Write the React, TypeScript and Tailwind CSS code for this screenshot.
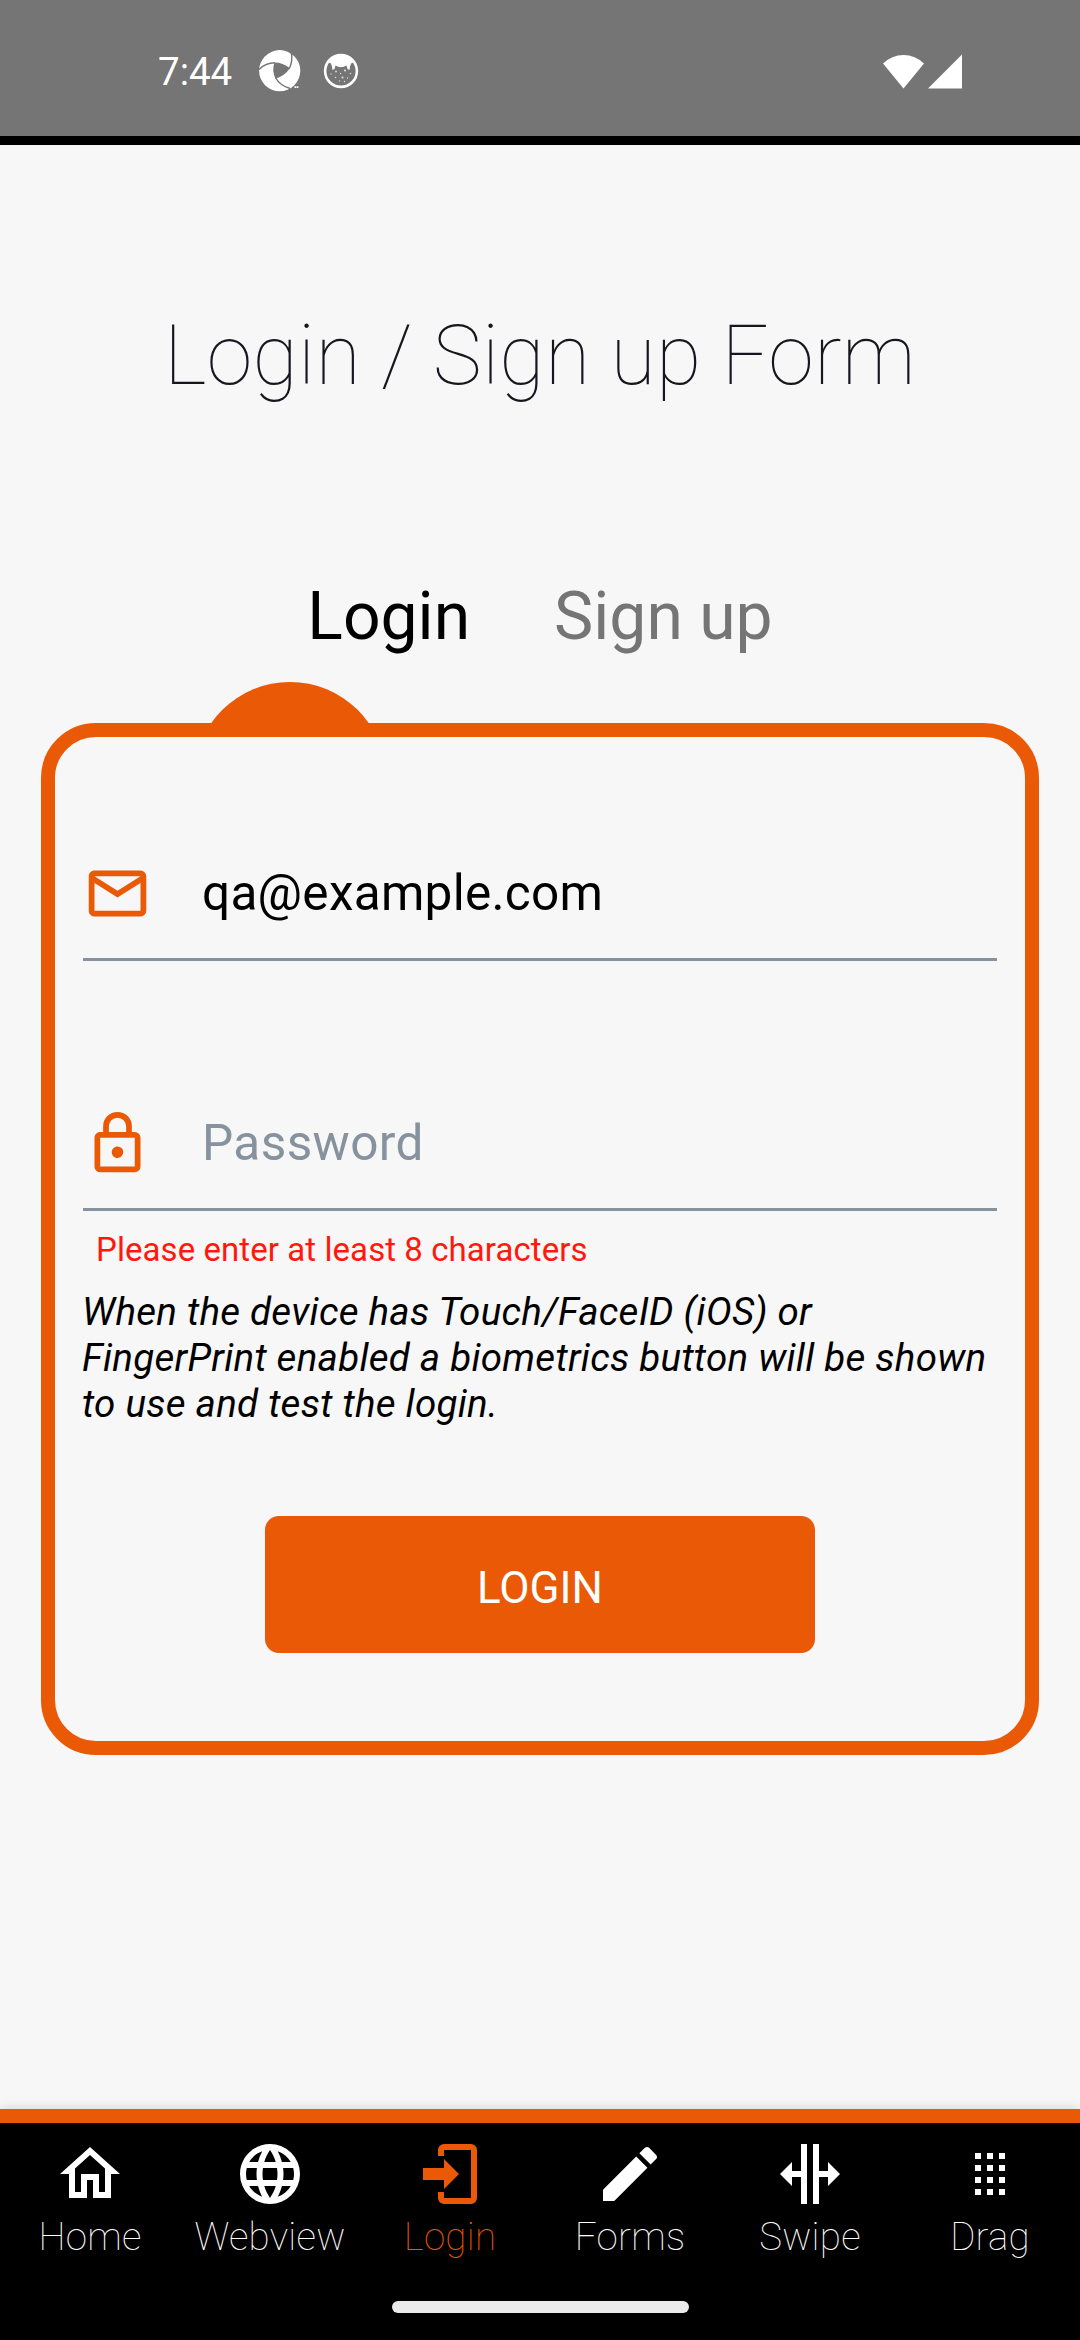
import React from "react";

const ICONS = {
  home: "M12 5.69L17 10.19V18H15V12H9V18H7V10.19L12 5.69M12 3L2 12H5V20H11V14H13V20H19V12H22L12 3Z",
  web: "M16.36,14C16.44,13.34 16.5,12.68 16.5,12C16.5,11.32 16.44,10.66 16.36,10H19.74C19.9,10.64 20,11.31 20,12C20,12.69 19.9,13.36 19.74,14M14.59,19.56C15.19,18.45 15.65,17.25 15.97,16H18.92C17.96,17.65 16.43,18.93 14.59,19.56M14.34,14H9.66C9.56,13.34 9.5,12.68 9.5,12C9.5,11.32 9.56,10.65 9.66,10H14.34C14.43,10.65 14.5,11.32 14.5,12C14.5,12.68 14.43,13.34 14.34,14M12,19.96C11.17,18.76 10.5,17.43 10.09,16H13.91C13.5,17.43 12.83,18.76 12,19.96M8,8H5.08C6.03,6.34 7.57,5.06 9.4,4.44C8.8,5.55 8.35,6.75 8,8M5.08,16H8C8.35,17.25 8.8,18.45 9.4,19.56C7.57,18.93 6.03,17.65 5.08,16M4.26,14C4.1,13.36 4,12.69 4,12C4,11.31 4.1,10.64 4.26,10H7.64C7.56,10.66 7.5,11.32 7.5,12C7.5,12.68 7.56,13.34 7.64,14M12,4.03C12.83,5.23 13.5,6.57 13.91,8H10.09C10.5,6.57 11.17,5.23 12,4.03M18.92,8H15.97C15.65,6.75 15.19,5.55 14.59,4.44C16.43,5.07 17.96,6.34 18.92,8M12,2C6.47,2 2,6.5 2,12A10,10 0 0,0 12,22A10,10 0 0,0 22,12A10,10 0 0,0 12,2Z",
  login:
    "M10 17V14H3V10H10V7L15 12L10 17M10 2H19A2 2 0 0 1 21 4V20A2 2 0 0 1 19 22H10A2 2 0 0 1 8 20V18H10V20H19V4H10V6H8V4A2 2 0 0 1 10 2Z",
  pencil:
    "M20.71,7.04C21.1,6.65 21.1,6 20.71,5.63L18.37,3.29C18,2.9 17.35,2.9 16.96,3.29L15.12,5.12L18.87,8.87M3,17.25V21H6.75L17.81,9.93L14.06,6.18L3,17.25Z",
  swipe: "M18,16V13H15V22H13V2H15V11H18V8L22,12L18,16M2,12L6,16V13H9V22H11V2H9V11H6V8L2,12Z",
  drag: "M7 5h2v2H7zM11 5h2v2h-2zM15 5h2v2h-2zM7 9h2v2H7zM11 9h2v2h-2zM15 9h2v2h-2zM7 13h2v2H7zM11 13h2v2h-2zM15 13h2v2h-2zM7 17h2v2H7zM11 17h2v2h-2zM15 17h2v2h-2z",
  email:
    "M4,4H20A2,2 0 0,1 22,6V18A2,2 0 0,1 20,20H4C2.89,20 2,19.1 2,18V6C2,4.89 2.89,4 4,4M12,11L20,6H4L12,11M4,18H20V8.37L12,13.36L4,8.37V18Z",
  lock: "M12,17C10.89,17 10,16.1 10,15C10,13.89 10.89,13 12,13A2,2 0 0,1 14,15A2,2 0 0,1 12,17M18,20V10H6V20H18M18,8A2,2 0 0,1 20,10V20A2,2 0 0,1 18,22H6C4.89,22 4,21.1 4,20V10C4,8.89 4.89,8 6,8H7V6A5,5 0 0,1 12,1A5,5 0 0,1 17,6V8H18M12,3A3,3 0 0,0 9,6V8H15V6A3,3 0 0,0 12,3Z",
};

type IconName = keyof typeof ICONS;

function Icon({ name, className }: { name: IconName; className: string }) {
  return (
    <svg viewBox="0 0 24 24" fill="currentColor" className={className}>
      <path d={ICONS[name]} />
    </svg>
  );
}

function ShutterIcon() {
  return (
    <svg viewBox="0 0 42 42" className="ml-[27px] size-[42px] text-white">
      <circle cx="20.7" cy="20.7" r="20.6" fill="currentColor" />
      <g fill="none" stroke="#757575" strokeWidth="1.5">
        <path d="M0 19.500Q6 13 16 12.800" />
        <path d="M32.300 2Q34 11 30.300 18.500" />
        <path d="M16.700 28Q21 35.500 31 38.500" />
      </g>
      <path d="M15.500 12.600Q23.500 12.500 31 18.300Q25.500 26 16.500 28.800Q12.500 20.500 15.500 12.600Z" fill="#757575" />
      <path d="M35.500 36.300h1.800v1.600h-1.800zM37.800 36.300h1.600v1.600h-1.600z" fill="currentColor" />
    </svg>
  );
}

function CatIcon() {
  return (
    <svg viewBox="0 0 36 36" className="ml-[22px] size-[36px] text-white">
      <circle cx="18" cy="18" r="15.900" fill="none" stroke="currentColor" strokeWidth="2.600" />
      <path
        d="M5 9.500Q11 1.500 18 1.500T31 9.500L28.500 10Q27 12 26.500 17L24.500 16L23.500 12.500Q21 14.300 18 14.300T12.500 12.500L11.500 16L9.500 17Q9 12 7.500 10Z"
        fill="currentColor"
      />
      <g fill="currentColor" opacity="0.75">
        <circle cx="13" cy="18.500" r="0.900" />
        <circle cx="22" cy="17.500" r="1.100" />
        <circle cx="17.500" cy="20.500" r="0.700" />
        <circle cx="8" cy="21" r="0.700" />
        <circle cx="27.500" cy="20.500" r="0.800" />
        <circle cx="12.500" cy="24.500" r="0.800" />
        <circle cx="19.500" cy="24.500" r="1.100" />
        <circle cx="24.500" cy="25" r="0.700" />
        <circle cx="16.500" cy="28" r="0.700" />
        <circle cx="21.500" cy="28.500" r="0.700" />
      </g>
    </svg>
  );
}

function StatusBar() {
  return (
    <header className="flex h-[145px] items-start border-b-[9px] border-black bg-[#757575]">
      <div className="flex h-[142px] w-full items-center pl-[158px] pr-[117px]">
        <span className="pt-[2px] text-[38.5px] leading-none text-white">7:44</span>
        <ShutterIcon />
        <CatIcon />
        <svg viewBox="0 0 80 35" className="ml-auto h-[35px] w-[80px] text-white" fill="currentColor">
          <path d="M0 9.500A29 29 0 0 1 41 9.500L20.500 34.500Z" />
          <path d="M45 34.500L79 0.500V34.500Z" />
        </svg>
      </div>
    </header>
  );
}

const TABS: { icon: IconName; label: string; active?: boolean }[] = [
  { icon: "home", label: "Home" },
  { icon: "web", label: "Webview" },
  { icon: "login", label: "Login", active: true },
  { icon: "pencil", label: "Forms" },
  { icon: "swipe", label: "Swipe" },
  { icon: "drag", label: "Drag" },
];

function BottomNav() {
  return (
    <nav className="flex h-[231px] flex-col items-center border-t-[14px] border-[#ea5906] bg-black shadow-[0_0_12px_rgba(0,0,0,0.15)]">
      <div className="grid w-full grid-cols-6">
        {TABS.map((tab) => (
          <div
            key={tab.label}
            className={`flex flex-col items-center pt-[15px] ${tab.active ? "text-[#ea5906]" : "text-white"}`}
          >
            <Icon name={tab.icon} className="size-[72px]" />
            <span className="mt-[4px] text-[38.5px] font-thin leading-[46px] tracking-[0.25px]">{tab.label}</span>
          </div>
        ))}
      </div>
      <div className="mt-[41px] h-[12px] w-[297px] rounded-full bg-[#ebebeb]" />
    </nav>
  );
}

export default function App() {
  return (
    <div className="flex h-[2340px] w-[1080px] flex-col overflow-hidden bg-[#f7f7f7] font-[Roboto,sans-serif]">
      <StatusBar />
      <main className="flex flex-1 flex-col">
        <h1 className="mt-[162px] text-center text-[82.5px] font-thin leading-[97px] tracking-[0.33px] text-[#15161e]">
          Login / Sign up Form
        </h1>
        <div className="mt-[174px] flex h-[78px] justify-center gap-[84px] text-[66px] leading-[78px]">
          <span className="text-black">Login</span>
          <span className="text-[#757575]">Sign up</span>
        </div>
        <div className="ml-[194px] mt-[26px] h-[41px] w-[192px] overflow-hidden">
          <div className="size-[192px] rounded-full bg-[#ea5906]" />
        </div>
        <section className="mx-[41px] flex h-[1032px] flex-col rounded-[55px] border-[14px] border-[#ea5906] px-[28px]">
          <div className="mt-[102px] flex h-[122px] items-center border-b-3 border-[#86939e] pb-[11px]">
            <Icon name="email" className="size-[69px] text-[#ea5906]" />
            <span className="ml-[50px] text-[49.5px] tracking-[0.28px] text-black">qa@example.com</span>
          </div>
          <div className="mt-[128px] flex h-[122px] items-center border-b-3 border-[#86939e] pb-[11px]">
            <Icon name="lock" className="size-[69px] text-[#ea5906]" />
            <span className="ml-[50px] text-[49.5px] tracking-[0.4px] text-[#86939e]">Password</span>
          </div>
          <p className="ml-[13px] mt-[19px] text-[33px] leading-[39px] tracking-[0.07px] text-[#ff190c]">
            Please enter at least 8 characters
          </p>
          <p className="-ml-px mt-[20px] whitespace-nowrap text-[38.5px] italic leading-[46px] tracking-[0.27px] text-black">
            When the device has Touch/FaceID (iOS) or
            <br />
            FingerPrint enabled a biometrics button will be shown
            <br />
            to use and test the login.
          </p>
          <button className="mt-[89px] h-[137px] w-[550px] self-center rounded-[14px] bg-[#ea5906] pt-[6px] text-[44px] text-white">
            LOGIN
          </button>
        </section>
      </main>
      <BottomNav />
    </div>
  );
}
